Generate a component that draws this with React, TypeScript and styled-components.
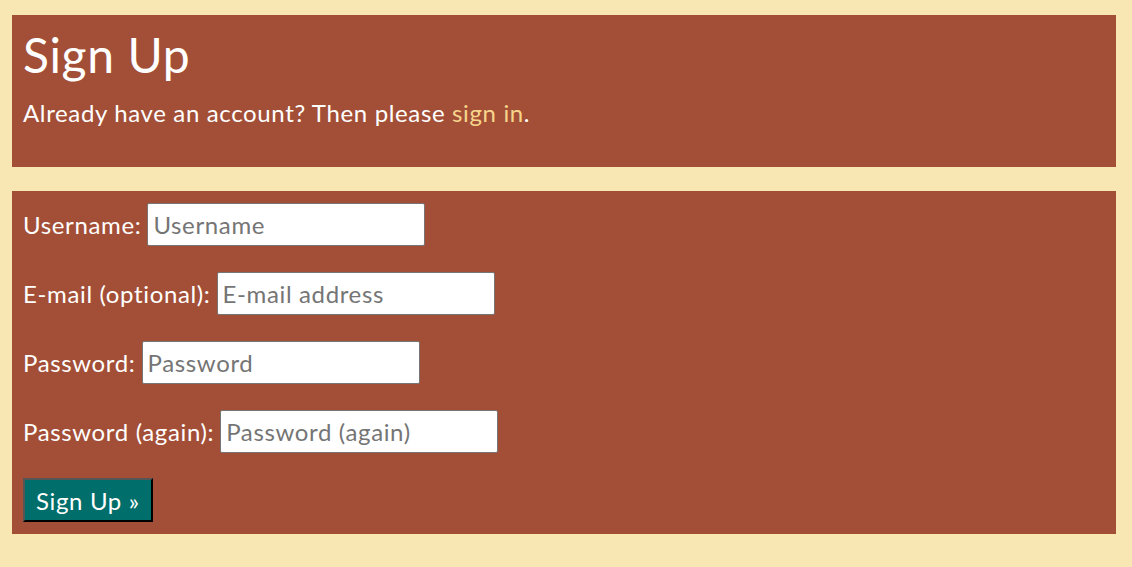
import React from "react";
import styled, { createGlobalStyle } from "styled-components";

const Global = createGlobalStyle`
  html, body { margin: 0; padding: 0; background: #f8e7b3; }
  body { font-family: Lato, "Open Sans", sans-serif; color: #ffffff; letter-spacing: 0.04em; }
`;

const Page = styled.div`
  display: flex;
  flex-direction: column;
  gap: 24px;
  padding: 15px 16px 33px 12px;
`;

const Panel = styled.section<{ $bottom?: number }>`
  background: #a34f37;
  padding: 12px 11px ${(p) => p.$bottom ?? 12}px;
`;

const Title = styled.h1`
  margin: 0;
  font-size: 48px;
  font-weight: 400;
  line-height: 56px;
`;

const Lead = styled.p`
  margin: 16px 0 28px;
  font-size: 24px;
  line-height: 28px;
`;

const Link = styled.a`
  color: #f6d58b;
  text-decoration: none;
`;

const Form = styled.form`
  display: flex;
  flex-direction: column;
  align-items: flex-start;
  gap: 26px;
`;

const Row = styled.label`
  display: flex;
  align-items: center;
  gap: 6px;
  font-size: 24px;
  line-height: 28px;
`;

const Input = styled.input`
  box-sizing: border-box;
  width: 278px;
  height: 43px;
  margin: 0;
  padding: 0 5px;
  border: 1px solid #767676;
  border-radius: 2px;
  background: #fff;
  font-family: inherit;
  letter-spacing: inherit;
  font-size: 24px;
  color: #222;
  &::placeholder { color: #757575; }
`;

const Button = styled.button`
  box-sizing: border-box;
  height: 44px;
  margin: -1px 0 0;
  padding: 0 11px;
  background: #006e6b;
  color: #fff;
  font-family: inherit;
  letter-spacing: inherit;
  font-size: 24px;
  border: 2px outset #555;
  border-right-color: #000;
  border-bottom-color: #000;
  cursor: pointer;
`;

const fields = [
  { label: "Username:", placeholder: "Username", type: "text" },
  { label: "E-mail (optional):", placeholder: "E-mail address", type: "email" },
  { label: "Password:", placeholder: "Password", type: "password" },
  { label: "Password (again):", placeholder: "Password (again)", type: "password" },
];

export default function App() {
  return (
    <>
      <Global />
      <Page>
        <Panel>
          <Title>Sign Up</Title>
          <Lead>
            Already have an account? Then please <Link href="#">sign in</Link>.
          </Lead>
        </Panel>
        <Panel>
          <Form onSubmit={(e) => e.preventDefault()}>
            {fields.map((f) => (
              <Row key={f.label}>
                {f.label}
                <Input type={f.type} placeholder={f.placeholder} />
              </Row>
            ))}
            <Button type="submit">Sign Up »</Button>
          </Form>
        </Panel>
      </Page>
    </>
  );
}
